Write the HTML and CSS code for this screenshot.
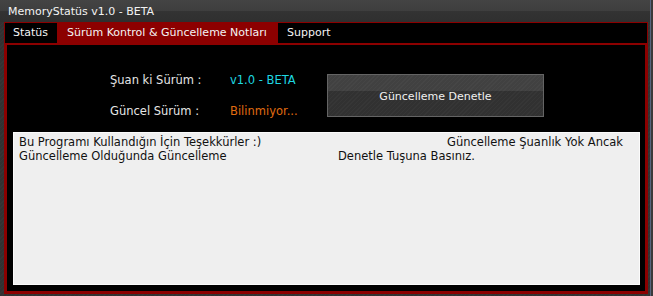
FILE: index.html
```html
<!DOCTYPE html>
<html lang="tr">
<head>
<meta charset="utf-8">
<title>MemoryStatüs v1.0 - BETA</title>
<link rel="stylesheet" href="styles.css">
</head>
<body>
<div class="window">
  <div class="titlebar">MemoryStatüs v1.0 - BETA</div>
  <div class="tabctl">
    <div class="tabs">
      <div class="tab tab-first">Statüs</div>
      <div class="tab tab-active">Sürüm Kontrol &amp; Güncelleme Notları</div>
      <div class="tab tab-last">Support</div>
    </div>
    <div class="page">
      <div class="info">
        <div class="fields">
          <span class="label">Şuan ki Sürüm :</span>
          <span class="value value-current">v1.0 - BETA</span>
          <span class="label">Güncel Sürüm :</span>
          <span class="value value-latest">Bilinmiyor...</span>
        </div>
        <button class="check-btn" type="button">Güncelleme Denetle</button>
      </div>
      <div class="notes">
        <div class="line"><span class="seg seg-1">Bu Programı Kullandığın İçin Teşekkürler :)</span><span>Güncelleme Şuanlık Yok Ancak</span></div>
        <div class="line"><span class="seg seg-2">Güncelleme Olduğunda Güncelleme</span><span>Denetle Tuşuna Basınız.</span></div>
      </div>
    </div>
  </div>
</div>
</body>
</html>
```

FILE: styles.css
```css
html, body {
  margin: 0;
  padding: 0;
}

body {
  width: 653px;
  height: 296px;
  overflow: hidden;
  background: #343434;
  font-family: "DejaVu Sans", sans-serif;
  font-size: 11px;
}

.window {
  width: 653px;
  height: 296px;
  display: flex;
  flex-direction: column;
  background:
    repeating-linear-gradient(135deg, #363636 0 1px, #323232 1px 3px);
  box-shadow: inset -2px 0 0 #3a3a3a, inset -3px 0 0 #56657f;
}

.titlebar {
  height: 20px;
  padding: 2px 0 0 8px;
  line-height: 20px;
  color: #f2f2f2;
  background: linear-gradient(#444 0, #3e3e3e 11px, #333 11px, #2f2f2f 22px);
  box-shadow: inset -2px 0 0 #3a3a3a, inset -3px 0 0 #56657f;
}

.tabctl {
  flex: 1;
  margin: 0 5px 2px 4px;
  border: 1px solid #8c0000;
  background: #000;
  display: flex;
  flex-direction: column;
}

.tabs {
  display: flex;
  height: 20px;
  line-height: 20px;
  color: #f4f4f4;
}

.tab {
  white-space: nowrap;
}

.tab-first {
  width: 44px;
  padding-left: 8px;
}

.tab-active {
  width: 211px;
  padding-left: 10px;
  background: #8c0000;
}

.tab-last {
  padding-left: 9px;
}

.page {
  flex: 1;
  border: 2px solid #8c0000;
  display: flex;
  flex-direction: column;
}

.info {
  height: 87px;
  display: flex;
  padding-left: 103px;
}

.fields {
  display: grid;
  grid-template-columns: 120px 97px;
  grid-auto-rows: 15px;
  row-gap: 16px;
  padding-top: 28px;
  line-height: 15px;
  font-size: 11.5px;
  white-space: nowrap;
}

.label {
  color: #e6e6e6;
}

.value-current {
  color: #1ed8e0;
}

.value-latest {
  color: #e06c10;
}

.check-btn {
  margin-top: 29px;
  width: 217px;
  height: 43px;
  padding: 1px 0 0;
  border: 1px solid #646464;
  font-family: "DejaVu Sans", sans-serif;
  font-size: 11px;
  color: #f0f0f0;
  background:
    linear-gradient(rgba(255,255,255,0.08) 0 16px, rgba(0,0,0,0) 16px),
    repeating-linear-gradient(135deg, #363636 0 1px, #313131 1px 3px);
}

.notes {
  flex: 1;
  margin: 0 5px 6px 6px;
  border: 1px solid #fbfbfb;
  background: #efefef;
  padding: 2px 5px;
  color: #111;
  font-size: 11.5px;
  line-height: 14px;
  white-space: nowrap;
}

.seg {
  display: inline-block;
}

.seg-1 {
  width: 428px;
}

.seg-2 {
  width: 319px;
}
```
